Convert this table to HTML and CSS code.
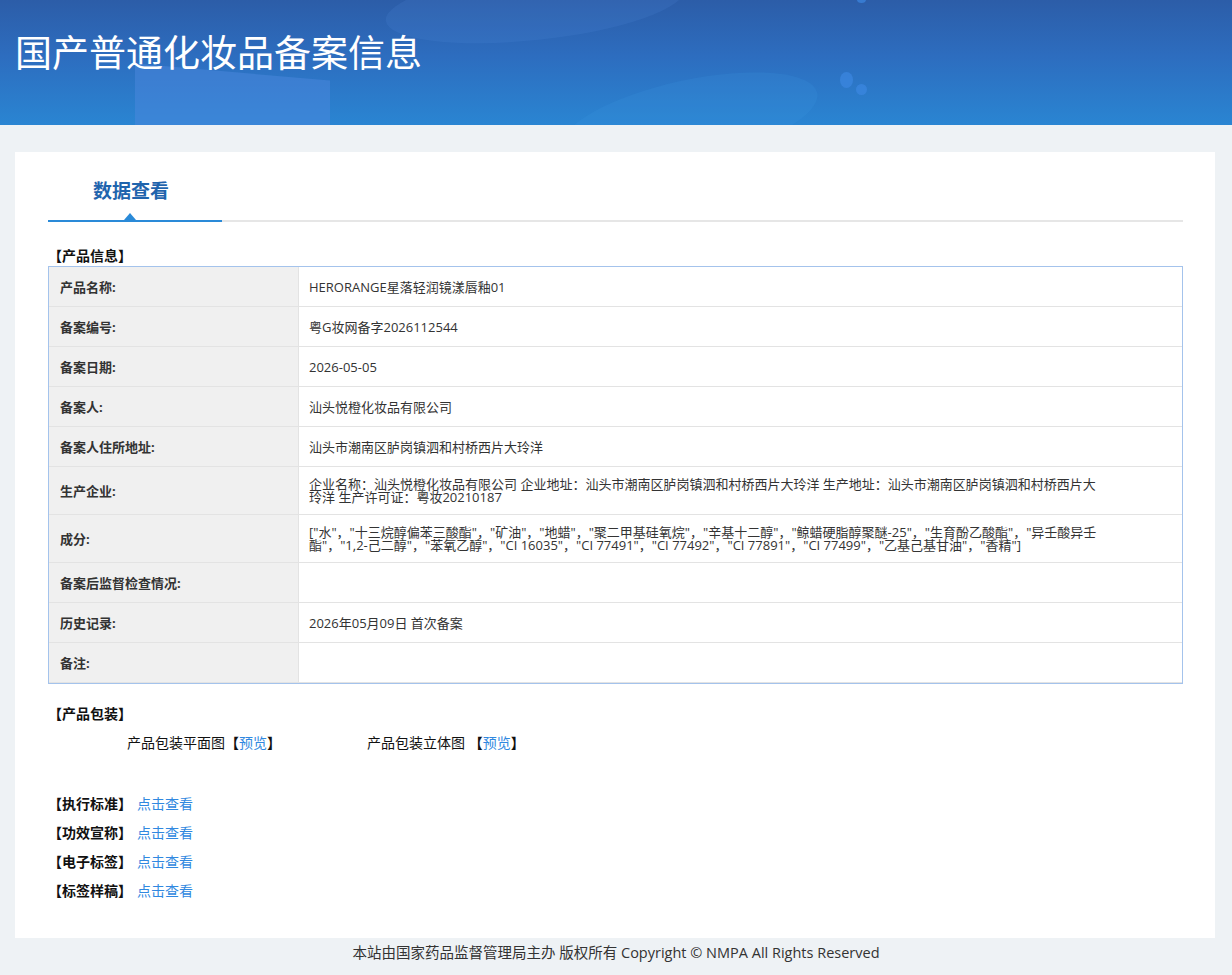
FILE: index.html
```html
<!DOCTYPE html>
<html lang="zh-CN">
<head>
<meta charset="utf-8">
<title>国产普通化妆品备案信息</title>
<link rel="stylesheet" href="styles.css">
</head>
<body>
<header class="banner">
  <div class="deco deco-a"></div>
  <div class="deco deco-b"></div>
  <div class="deco deco-c"></div>
  <div class="deco dot dot-1"></div>
  <div class="deco dot dot-2"></div>
  <div class="deco dot dot-3"></div>
  <h1 class="banner-title">国产普通化妆品备案信息</h1>
</header>

<main class="card">
  <div class="tabs">
    <div class="tab active">数据查看<span class="caret"></span></div>
    <div class="tab-rest"></div>
  </div>

  <div class="section-title">【产品信息】</div>
  <table class="info">
    <tr><th>产品名称:</th><td>HERORANGE星落轻润镜漾唇釉01</td></tr>
    <tr><th>备案编号:</th><td>粤G妆网备字2026112544</td></tr>
    <tr><th>备案日期:</th><td>2026-05-05</td></tr>
    <tr><th>备案人:</th><td>汕头悦橙化妆品有限公司</td></tr>
    <tr><th>备案人住所地址:</th><td>汕头市潮南区胪岗镇泗和村桥西片大玲洋</td></tr>
    <tr><th>生产企业:</th><td>企业名称：汕头悦橙化妆品有限公司 企业地址：汕头市潮南区胪岗镇泗和村桥西片大玲洋 生产地址：汕头市潮南区胪岗镇泗和村桥西片大玲洋 生产许可证：粤妆20210187</td></tr>
    <tr><th>成分:</th><td>["水"，"十三烷醇偏苯三酸酯"，"矿油"，"地蜡"，"聚二甲基硅氧烷"，"辛基十二醇"，"鲸蜡硬脂醇聚醚-25"，"生育酚乙酸酯"，"异壬酸异壬酯"，"1,2-己二醇"，"苯氧乙醇"，"CI 16035"，"CI 77491"，"CI 77492"，"CI 77891"，"CI 77499"，"乙基己基甘油"，"香精"]</td></tr>
    <tr><th>备案后监督检查情况:</th><td></td></tr>
    <tr><th>历史记录:</th><td>2026年05月09日 首次备案</td></tr>
    <tr><th>备注:</th><td></td></tr>
  </table>

  <div class="section-title pack-title">【产品包装】</div>
  <div class="pack-row">
    <span class="pack-item">产品包装平面图<b class="br">【</b><a class="link" href="#">预览</a><b class="br">】</b></span>
    <span class="pack-item">产品包装立体图 <b class="br">【</b><a class="link" href="#">预览</a><b class="br">】</b></span>
  </div>

  <ul class="more">
    <li><b>【执行标准】</b><a class="link" href="#">点击查看</a></li>
    <li><b>【功效宣称】</b><a class="link" href="#">点击查看</a></li>
    <li><b>【电子标签】</b><a class="link" href="#">点击查看</a></li>
    <li><b>【标签样稿】</b><a class="link" href="#">点击查看</a></li>
  </ul>
</main>

<footer class="footer">本站由国家药品监督管理局主办 版权所有 Copyright © NMPA All Rights Reserved</footer>
</body>
</html>
```

FILE: styles.css
```css
* { box-sizing: border-box; }

html, body {
  margin: 0;
  padding: 0;
}

body {
  background: #eef2f5;
  font-family: "Open Sans", "Noto Sans CJK SC", sans-serif;
  font-size: 13px;
  color: #333;
}

.banner {
  position: relative;
  height: 125px;
  overflow: hidden;
  background: linear-gradient(180deg, #2c5da8 0%, #2d6dbf 45%, #2a85d2 100%);
}

.deco {
  position: absolute;
  pointer-events: none;
}

.deco-a {
  left: 135px;
  top: 72px;
  width: 195px;
  height: 80px;
  background: rgba(75, 135, 222, 0.5);
  transform: skewY(5deg);
}

.deco-b {
  left: 385px;
  top: -30px;
  width: 300px;
  height: 70px;
  border-radius: 50%;
  background: rgba(100, 160, 235, 0.12);
  transform: rotate(-6deg);
}

.deco-c {
  left: 560px;
  top: 80px;
  width: 260px;
  height: 80px;
  border-radius: 50%;
  background: rgba(60, 150, 225, 0.2);
  transform: rotate(-12deg);
}

.dot {
  border-radius: 50%;
  background: rgba(60, 135, 225, 0.7);
}
.dot-1 { left: 840px; top: 72px; width: 13px; height: 16px; }
.dot-2 { left: 856px; top: 84px; width: 11px; height: 11px; }
.dot-3 { left: 857px; top: -4px; width: 9px; height: 7px; }

.banner-title {
  position: relative;
  margin: 0;
  padding: 26px 0 0 15px;
  font-size: 37px;
  line-height: 50px;
  font-weight: 400;
  color: #fff;
  font-family: "Noto Sans CJK SC", sans-serif;
}

.card {
  margin: 27px 17px 0 15px;
  background: #fff;
  padding: 20px 32px 34px 33px;
}

.tabs {
  display: flex;
  align-items: flex-end;
}

.tab {
  position: relative;
  width: 174px;
  padding-bottom: 10px;
  padding-right: 8px;
  line-height: 38px;
  text-align: center;
  font-size: 19px;
  font-weight: 700;
  color: #1f64ad;
  border-bottom: 2px solid #2a8ad8;
}

.caret {
  position: absolute;
  left: 76px;
  bottom: 0;
  width: 0;
  height: 0;
  border-left: 6px solid transparent;
  border-right: 6px solid transparent;
  border-bottom: 7px solid #2a8ad8;
}

.tab-rest {
  flex: 1;
  border-bottom: 2px solid #e6e6e6;
}

.section-title {
  margin-top: 24px;
  height: 20px;
  line-height: 20px;
  font-size: 14px;
  font-weight: 700;
  color: #111;
}

.info {
  width: 100%;
  border-collapse: separate;
  border-spacing: 0;
  border: 1px solid #a4c3ec;
}

.info tr {
  height: 40px;
}

.info th,
.info td {
  border-bottom: 1px solid #e3e3e3;
  vertical-align: middle;
  line-height: 13px;
  padding-top: 11px;
  padding-bottom: 10px;
}

.info th {
  width: 250px;
  background: #f0f0f0;
  text-align: left;
  font-weight: 700;
  padding-left: 11px;
  border-right: 1px solid #e3e3e3;
  color: #333;
}

.info td {
  padding-left: 10px;
  padding-right: 74px;
  color: #333;
}

.pack-title {
  margin-top: 20px;
}

.pack-row {
  display: flex;
  margin-top: 9px;
  padding-left: 79px;
  height: 20px;
  line-height: 20px;
  font-size: 14px;
  color: #111;
}

.pack-item:first-child {
  width: 240px;
}

.br {
  font-weight: 700;
}

.link {
  color: #3088e0;
  text-decoration: none;
}

.more {
  list-style: none;
  margin: 35px 0 0 0;
  padding: 0;
}

.more li {
  display: flex;
  align-items: center;
  height: 29px;
  font-size: 14px;
}

.more b {
  color: #111;
}

.more .link {
  margin-left: 5px;
}

.footer {
  text-align: center;
  line-height: 30px;
  font-size: 14.5px;
  color: #333;
}
```
